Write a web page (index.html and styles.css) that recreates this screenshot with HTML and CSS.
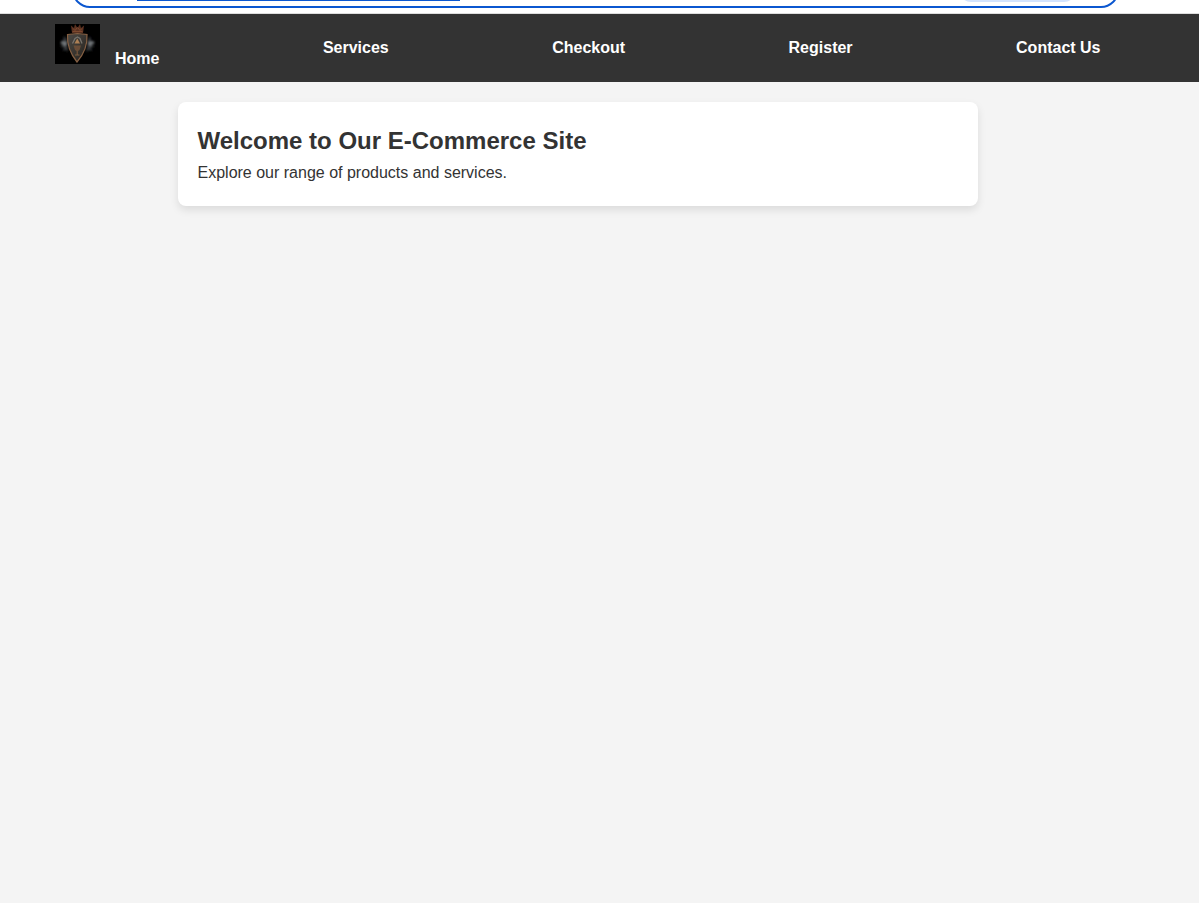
FILE: index.html
```html
<!DOCTYPE html>
<html lang="en">
<head>
<meta charset="utf-8">
<title>E-Commerce Site</title>
<link rel="stylesheet" href="styles.css">
</head>
<body>
<div class="toolbar">
  <div class="address"><span class="selection"></span><span class="chip"></span></div>
</div>
<nav class="nav">
  <a class="home">
    <svg class="logo" viewBox="0 0 45 40" width="45" height="40">
      <defs>
        <linearGradient id="steel" x1="0" y1="0" x2="1" y2="1">
          <stop offset="0" stop-color="#4c4a46"/><stop offset=".5" stop-color="#3a3631"/><stop offset="1" stop-color="#211f1d"/>
        </linearGradient>
        <filter id="soft"><feGaussianBlur stdDeviation=".4"/></filter>
        <filter id="haze"><feGaussianBlur stdDeviation=".9"/></filter>
      </defs>
      <rect width="45" height="40" fill="#000"/>
      <g filter="url(#haze)" fill="#34373a">
        <path d="M12 15L9 12 8 16 5 19 7 21 5 23 9 23 8 27 11 26 13 28z"/>
        <path d="M33 15L35 12 36 16 40 19 37 21 40 23 36 23 37 27 34 26 31 28z"/>
        <path d="M6 18.500l5 .5-2 3M39 18.500l-5 .5 2 3" fill="none" stroke="#7d8285" stroke-width="1.800"/>
      </g>
      <g filter="url(#soft)">
        <path d="M16 1.500L19 4 20 0 22.500 4 25 0 26 4 29 1.500 28 9H17z" fill="#5a3020"/>
        <path d="M17.500 7.500h10M18 4.500l2 2 2.500-3 2.500 3 2-2" fill="none" stroke="#8c5636" stroke-width=".7"/>
        <path d="M12.500 10.500L22.500 9.500 32 10.500C32.500 20 29 30 22 38 15.500 30 12 20 12.500 10.500z" fill="url(#steel)" stroke="#866043" stroke-width="1.200"/>
        <path d="M17.500 19.500L20 14.500 22.500 13 25 14.500 27 19.500" fill="none" stroke="#77736c" stroke-width="1.300"/>
        <path d="M22.300 14.500L25 19.500H19.500z" fill="#ae8054"/>
        <path d="M18.500 21.500H26L24.500 26 23 27V31H21.500V27L20 26z" fill="#6b4e37"/>
        <path d="M20 31h4.500" stroke="#7a5a3e" stroke-width="1"/>
      </g>
    </svg>
    <span>Home</span>
  </a>
  <a>Services</a>
  <a>Checkout</a>
  <a>Register</a>
  <a>Contact Us</a>
</nav>
<main class="card">
  <h1>Welcome to Our E-Commerce Site</h1>
  <p>Explore our range of products and services.</p>
</main>
</body>
</html>
```
FILE: styles.css
```css
* { box-sizing: border-box; }
body {
  margin: 0;
  min-height: 903px;
  background: #f4f4f4;
  color: #333;
  font-family: "Liberation Sans", Arial, sans-serif;
  font-size: 16px;
}
.toolbar {
  height: 14px;
  overflow: hidden;
  background: #fff;
  border-bottom: 1px solid #dedede;
  display: flex;
  align-items: flex-end;
  padding: 0 80px 5px 72px;
}
.address {
  flex: 1;
  height: 36px;
  border: 2px solid #0b57d0;
  border-radius: 18px;
  display: flex;
  justify-content: space-between;
  align-items: flex-end;
  padding: 0 41px 4px 63px;
}
.selection {
  width: 323px;
  height: 25px;
  margin-bottom: 1px;
  background: #0b57d0;
}
.chip {
  width: 117px;
  height: 24px;
  border-radius: 12px;
  background: #d3e3fd;
}
.nav {
  height: 68px;
  padding: 10px 98.5px 10px 55px;
  background: #333;
  color: #fff;
  font-weight: bold;
  line-height: 18px;
  display: flex;
  justify-content: space-between;
}
.nav a { margin-top: 15px; }
.nav .home {
  display: flex;
  gap: 15px;
  margin-top: 0;
}
.home span { margin-top: 26px; }
.card {
  width: 800px;
  height: 104px;
  margin: 20px 0 0 177.5px;
  padding: 24px 20px 20px;
  background: #fff;
  border-radius: 8px;
  box-shadow: 0 4px 8px rgba(0, 0, 0, .1);
}
.card h1 {
  margin: 0;
  font-size: 24px;
  line-height: 30px;
}
.card p {
  margin: 8px 0 0;
  line-height: 18px;
}
```
